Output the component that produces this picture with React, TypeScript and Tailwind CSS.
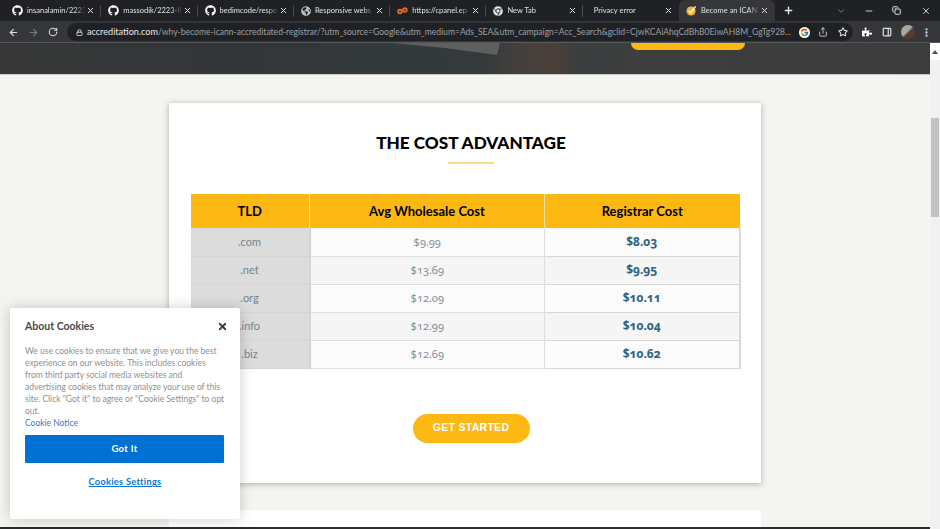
import { ArrowLeft, ArrowRight, ChevronDown, Copy, EllipsisVertical, Lock, Minus, PanelRight, Plus, RotateCw, Share, Star, X } from "lucide-react";
import { FaChrome, FaGithub, FaGlobeAmericas, FaPuzzlePiece } from "react-icons/fa";
import { FcGoogle } from "react-icons/fc";

const tabs = [
  { title: "insanalamin/2223", icon: "github" },
  { title: "massodik/2223-II", icon: "github" },
  { title: "bedimcode/respo", icon: "github" },
  { title: "Responsive webs", icon: "globe" },
  { title: "https://cpanel.ep", icon: "cpanel" },
  { title: "New Tab", icon: "chrome" },
  { title: "Privacy error", icon: "none" },
  { title: "Become an ICAN", icon: "check", active: true },
];

const rows = [
  { tld: ".com", avg: "$9.99", cost: "$8.03" },
  { tld: ".net", avg: "$13.69", cost: "$9.95" },
  { tld: ".org", avg: "$12.09", cost: "$10.11" },
  { tld: ".info", avg: "$12.99", cost: "$10.04" },
  { tld: ".biz", avg: "$12.69", cost: "$10.62" },
];

const TabIcon = ({ icon }: { icon: string }) => {
  if (icon === "github") return <FaGithub className="h-[11px] w-[11px] shrink-0 text-white" />;
  if (icon === "globe") return <FaGlobeAmericas className="h-[10px] w-[10px] shrink-0 text-[#b9bcc0]" />;
  if (icon === "chrome") return <FaChrome className="h-[10px] w-[10px] shrink-0 text-[#e0e2e5]" />;
  if (icon === "cpanel")
    return (
      <svg viewBox="0 0 12 8" className="h-[8px] w-[11px] shrink-0" fill="none" stroke="#f4641e" strokeWidth="2">
        <circle cx="3.2" cy="4.6" r="2" />
        <circle cx="8.6" cy="3" r="2" />
      </svg>
    );
  if (icon === "check")
    return (
      <svg viewBox="0 0 12 12" className="h-[11px] w-[11px] shrink-0">
        <circle cx="5.5" cy="6.5" r="5" fill="#f2b632" />
        <path d="M3 6.5l2 2 5.5-7" fill="none" stroke="#fff" strokeWidth="1.4" />
      </svg>
    );
  return null;
};

const App = () => {
  return (
    <div className="relative flex h-[529px] w-[940px] flex-col overflow-hidden bg-[#f4f4f0] font-['Lato',sans-serif]">
      {/* tab strip */}
      <div className="flex h-[21px] shrink-0 items-center bg-[#202124] pl-[5px] text-[7.5px] text-[#dfe1e5]">
        {tabs.map((tab, i) => (
          <div
            key={tab.title}
            className={`flex h-[21px] w-[96.3px] shrink-0 items-center pl-[7px] ${
              tab.active ? "rounded-t-[6px] bg-[#35363a]" : ""
            }`}
          >
            <TabIcon icon={tab.icon} />
            <span className="ml-[4px] min-w-0 flex-1 overflow-hidden whitespace-nowrap [mask-image:linear-gradient(to_right,black_80%,transparent)]">{tab.title}</span>
            <X className="h-[9px] w-[9px] shrink-0 text-[#e8eaed]" strokeWidth={2.5} />
            <span className={`ml-[5px] h-[12px] w-px shrink-0 ${i < 6 ? "bg-[#4a4b4f]" : ""}`} />
          </div>
        ))}
        <div className="flex h-[21px] flex-1 items-center text-[#e8eaed]">
          <Plus className="ml-[8px] h-[11px] w-[11px]" strokeWidth={3} />
          <ChevronDown className="ml-[42px] h-[10px] w-[10px] text-[#8a8c90]" />
          <Minus className="ml-[18px] h-[10px] w-[10px]" />
          <Copy className="ml-[18px] h-[9px] w-[9px]" strokeWidth={2.5} />
          <X className="ml-[20px] h-[10px] w-[10px]" />
        </div>
      </div>

      {/* toolbar */}
      <div className="flex h-[22px] shrink-0 items-center border-b border-[#55565a] bg-[#35363a] pt-[1px] text-[#dadce0]">
        <ArrowLeft className="ml-[8px] h-[11px] w-[11px]" strokeWidth={2.5} />
        <ArrowRight className="ml-[9px] h-[11px] w-[11px] text-[#77787b]" strokeWidth={2.5} />
        <RotateCw className="ml-[9px] h-[10px] w-[10px]" strokeWidth={2.5} />
        <div className="ml-[9px] flex h-[18px] w-[786px] items-center rounded-full bg-[#202124] pl-[9px] pr-[5px] text-[8.55px]">
          <Lock className="h-[7px] w-[7px] shrink-0" strokeWidth={3} />
          <span className="ml-[4px] min-w-0 flex-1 whitespace-nowrap text-[#9aa0a6]">
            <span className="text-[9.1px] text-[#e8eaed]">accreditation.com</span>
            /why-become-icann-accreditated-registrar/?utm_source=Google&utm_medium=Ads_SEA&utm_campaign=Acc_Search&gclid=CjwKCAiAhqCdBhB0EiwAH8M_GgTg928...
          </span>
          <span className="ml-[6px] flex h-[11px] w-[11px] shrink-0 items-center justify-center rounded-full bg-white">
            <FcGoogle className="h-[9px] w-[9px]" />
          </span>
          <Share className="ml-[8px] h-[10px] w-[10px] shrink-0" />
          <Star className="ml-[10px] h-[10px] w-[10px] shrink-0" strokeWidth={2.5} />
        </div>
        <FaPuzzlePiece className="ml-[9px] h-[10px] w-[10px] text-white" />
        <PanelRight className="ml-[10px] h-[10px] w-[10px]" strokeWidth={3} />
        <span className="ml-[9px] h-[14px] w-[14px] shrink-0 rounded-full bg-[linear-gradient(135deg,#a6aaa4_45%,#5a3a2c_55%)]" />
        <EllipsisVertical className="ml-[6px] h-[11px] w-[11px]" strokeWidth={3} />
      </div>

      <div className="flex min-h-0 flex-1">
        {/* page */}
        <div className="flex min-w-0 flex-1 flex-col">
          <div className="relative h-[32px] shrink-0 border-b border-[#c9c9c5] bg-[linear-gradient(90deg,#363636_0%,#333739_30%,#343a3c_52%,#45403c_56%,#4a3f39_60%,#3a3e3e_62%,#3e3e3e_70%,#3c3c3c_100%)]">
            {/* photo detail in the hero */}
            <svg className="absolute left-0 top-0 h-[31px] w-[930px]" viewBox="0 0 930 31">
              <polygon points="393,0 500,0 497,12 445,5" fill="#5d605e" />
            </svg>
            <div className="relative ml-[631px] h-[7px] w-[114px] rounded-b-full bg-[#fdb813]" />
          </div>

          <div className="ml-[169px] mt-[28px] flex h-[380px] w-[592px] shrink-0 flex-col items-center bg-white pl-[12px] pt-[28px] shadow-[0_1px_6px_rgba(0,0,0,0.3)]">
            <h2 className="text-[17.2px] font-black leading-[24px] text-black">THE COST ADVANTAGE</h2>
            <div className="mt-[7px] h-[2px] w-[46px] bg-[#fdd98a]" />
            <table className="ml-[-11px] mt-[30px] w-[549px] table-fixed border-collapse text-[11px]">
              <colgroup>
                <col className="w-[119px]" />
                <col className="w-[235px]" />
                <col className="w-[195px]" />
              </colgroup>
              <thead>
                <tr className="h-[34px] bg-[#fdb813] text-[13px] font-black text-black">
                  <th className="border-r border-[#fde3a0] pt-[2px]">TLD</th>
                  <th className="border-r border-[#fde3a0] pt-[2px]">Avg Wholesale Cost</th>
                  <th className="pt-[2px]">Registrar Cost</th>
                </tr>
              </thead>
              <tbody>
                {rows.map((row, i) => (
                  <tr key={row.tld} className={`h-[28px] ${i % 2 ? "bg-[#f5f5f5]" : "bg-[#fbfbfb]"}`}>
                    <td className="border-b border-r-2 border-[#d4d4d4] bg-[#dcdcdc] text-center text-[#74848f]">{row.tld}</td>
                    <td className="border-b border-r border-[#dedede] text-center font-['Noto_Sans',sans-serif] text-[#7f8f9b] oldstyle-nums">{row.avg}</td>
                    <td className="border-b border-r-2 border-[#d8d8d8] text-center font-['Noto_Sans',sans-serif] text-[12px] font-bold text-[#2d6382] oldstyle-nums">{row.cost}</td>
                  </tr>
                ))}
              </tbody>
            </table>
            <button className="mt-[45px] flex h-[29px] w-[117px] items-center justify-center rounded-full bg-[#fdb813] font-['Liberation_Sans',sans-serif] text-[10.5px] font-bold tracking-[0.3px] text-white">
              GET STARTED
            </button>
          </div>

          <div className="ml-[169px] mt-[27px] min-h-0 w-[592px] flex-1 bg-white" />
          <div className="h-[2px] shrink-0 bg-[#2b2b2b]" />
        </div>

        {/* scrollbar */}
        <div className="relative w-[10px] shrink-0 bg-[#f1f1f1]">
          <div className="flex h-[17px] items-center justify-center bg-white">
            <div className="h-0 w-0 border-x-[3px] border-b-[4px] border-x-transparent border-b-[#505050]" />
          </div>
          <div className="absolute left-[1px] top-[75px] h-[99px] w-[8px] bg-[#c1c1c1]" />
        </div>
      </div>

      {/* cookie dialog */}
      <div className="absolute left-[10px] top-[308px] h-[211px] w-[230px] rounded-[2px] bg-white px-[15px] pt-[11px] shadow-[0_0_14px_rgba(0,0,0,0.2)]">
        <div className="flex items-center justify-between">
          <h3 className="text-[10.5px] font-bold leading-[14px] text-[#4a4a4a]">About Cookies</h3>
          <X className="mr-[-3px] h-[11px] w-[11px] text-[#3c3c3c]" strokeWidth={4} />
        </div>
        <p className="mt-[12px] text-[8.5px] leading-[12px] text-[#8f8f8f]">
          We use cookies to ensure that we give you the best experience on our website. This includes cookies from third party social media websites and advertising cookies that may analyze your use of this site. Click "Got it" to agree or "Cookie Settings" to opt out.
        </p>
        <a className="block text-[8.5px] leading-[12px] text-[#4b72c4]">Cookie Notice</a>
        <button className="mt-[6px] h-[28px] w-[199px] rounded-[1px] bg-[#0070d2] text-[9.5px] font-bold tracking-[0.3px] text-white">Got It</button>
        <div className="mt-[12px] text-center text-[9.2px] font-bold tracking-[0.3px] text-[#0a74d6] underline">Cookies Settings</div>
      </div>
    </div>
  );
};

export default App;
